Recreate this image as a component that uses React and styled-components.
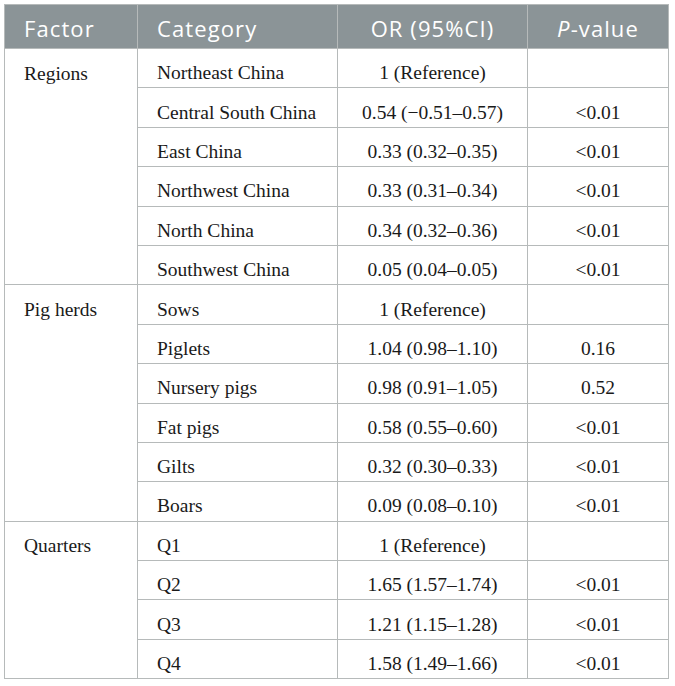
import React from "react";
import styled, { createGlobalStyle } from "styled-components";

const Global = createGlobalStyle`
  html, body { margin: 0; padding: 0; background: #ffffff; }
`;

const Page = styled.div`
  padding: 4px 0 0 4px;
`;

const Table = styled.table`
  border-collapse: collapse;
  table-layout: fixed;
  width: 664px;
  border: 1px solid #b6baba;
`;

const HeadCell = styled.th`
  background: #8b9497;
  color: #ffffff;
  font-family: "Open Sans", "Lato", sans-serif;
  font-weight: 400;
  font-size: 22px;
  letter-spacing: 1.1px;
  height: 44px;
  padding: 3px 0 0 ${(p) => (p.$center ? 0 : 19)}px;
  text-align: ${(p) => (p.$center ? "center" : "left")};
  border: 1px solid #b6baba;
  box-sizing: border-box;
  vertical-align: middle;
  white-space: nowrap;
`;

const Cell = styled.td`
  font-family: "Liberation Serif", "Times New Roman", serif;
  font-size: 19.5px;
  color: #1a1a1a;
  height: 39.4px;
  box-sizing: border-box;
  padding: ${(p) => (p.$top ? 0 : 10)}px 0 0 ${(p) => (p.$center ? 0 : 19)}px;
  text-align: ${(p) => (p.$center ? "center" : "left")};
  vertical-align: ${(p) => (p.$top ? "top" : "middle")};
  border: 1px solid #b6baba;
  white-space: nowrap;
`;

const GroupLabel = styled.div`
  height: 39.4px;
  box-sizing: border-box;
  padding-top: 10px;
  display: flex;
  align-items: center;
`;

const Italic = styled.i`
  font-style: italic;
`;

const groups = [
  {
    factor: "Regions",
    rows: [
      ["Northeast China", "1 (Reference)", ""],
      ["Central South China", "0.54 (\u22120.51\u20130.57)", "<0.01"],
      ["East China", "0.33 (0.32\u20130.35)", "<0.01"],
      ["Northwest China", "0.33 (0.31\u20130.34)", "<0.01"],
      ["North China", "0.34 (0.32\u20130.36)", "<0.01"],
      ["Southwest China", "0.05 (0.04\u20130.05)", "<0.01"],
    ],
  },
  {
    factor: "Pig herds",
    rows: [
      ["Sows", "1 (Reference)", ""],
      ["Piglets", "1.04 (0.98\u20131.10)", "0.16"],
      ["Nursery pigs", "0.98 (0.91\u20131.05)", "0.52"],
      ["Fat pigs", "0.58 (0.55\u20130.60)", "<0.01"],
      ["Gilts", "0.32 (0.30\u20130.33)", "<0.01"],
      ["Boars", "0.09 (0.08\u20130.10)", "<0.01"],
    ],
  },
  {
    factor: "Quarters",
    rows: [
      ["Q1", "1 (Reference)", ""],
      ["Q2", "1.65 (1.57\u20131.74)", "<0.01"],
      ["Q3", "1.21 (1.15\u20131.28)", "<0.01"],
      ["Q4", "1.58 (1.49\u20131.66)", "<0.01"],
    ],
  },
];

export default function App() {
  return (
    <Page>
      <Global />
      <Table>
        <colgroup>
          <col style={{ width: 133 }} />
          <col style={{ width: 200 }} />
          <col style={{ width: 190 }} />
          <col style={{ width: 141 }} />
        </colgroup>
        <thead>
          <tr>
            <HeadCell>Factor</HeadCell>
            <HeadCell>Category</HeadCell>
            <HeadCell $center>OR (95%CI)</HeadCell>
            <HeadCell $center>
              <Italic>P</Italic>-value
            </HeadCell>
          </tr>
        </thead>
        <tbody>
          {groups.map((g) =>
            g.rows.map((r, i) => (
              <tr key={g.factor + i}>
                {i === 0 && (
                  <Cell rowSpan={g.rows.length} $top>
                    <GroupLabel>{g.factor}</GroupLabel>
                  </Cell>
                )}
                <Cell>{r[0]}</Cell>
                <Cell $center>{r[1]}</Cell>
                <Cell $center>{r[2]}</Cell>
              </tr>
            ))
          )}
        </tbody>
      </Table>
    </Page>
  );
}
